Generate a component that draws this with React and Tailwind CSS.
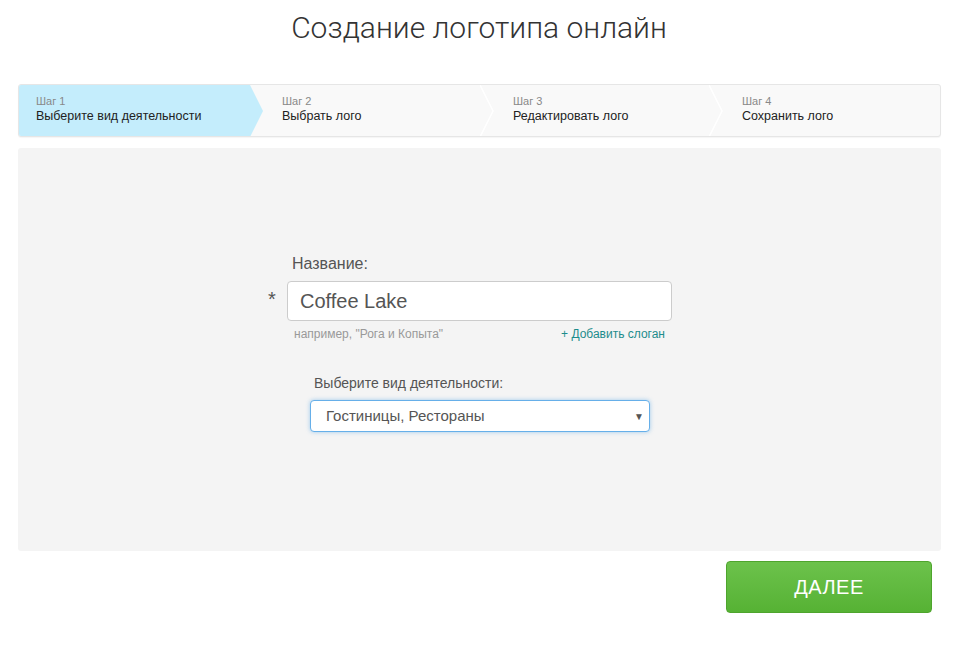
import React from 'react';

const steps = [
  { n: 'Шаг 1', label: 'Выберите вид деятельности', active: true, w: 'w-[231px]' },
  { n: 'Шаг 2', label: 'Выбрать лого', w: 'w-[231px]' },
  { n: 'Шаг 3', label: 'Редактировать лого', w: 'w-[229px]' },
  { n: 'Шаг 4', label: 'Сохранить лого', w: 'flex-1' },
];

const Step = ({ step, last }) => (
  <div
    className={`relative shrink-0 ${step.w} flex flex-col justify-center h-full pb-[2px] ${
      step.active ? 'bg-[#c4edfc] pl-[17px]' : 'pl-[32px]'
    }`}
  >
    <span className="text-[11px] leading-[13px] text-[#888]">{step.n}</span>
    <span className="text-[12.5px] leading-[16px] text-[#222]">{step.label}</span>
    {!last && (
      <svg
        className="absolute top-0 right-[-14px] z-10"
        width="15"
        height="52"
        viewBox="0 0 15 52"
      >
        {step.active ? (
          <polygon points="0,0 1,0 14,26 1,52 0,52" fill="#c4edfc" />
        ) : (
          <polyline points="0,0 13,26 0,52" fill="none" stroke="#fff" strokeWidth="1.5" />
        )}
      </svg>
    )}
  </div>
);

export default function App() {
  return (
    <div className="w-[958px] h-[645px] bg-white font-['Liberation_Sans',Arial,sans-serif]">
      <h1 className="pt-[10px] text-center text-[30px] leading-[36px] font-light text-[#333] font-['Roboto',sans-serif]">
        Создание логотипа онлайн
      </h1>

      <div className="ml-[18px] w-[923px] mt-[38px] h-[53px] flex bg-[#f9f9f9] border border-[#e6e6e6] rounded-[3px] overflow-hidden shadow-[0_1px_1px_rgba(0,0,0,0.04)]">
        {steps.map((s, i) => (
          <Step key={s.n} step={s} last={i === steps.length - 1} />
        ))}
      </div>

      <div className="ml-[18px] w-[923px] mt-[11px] h-[403px] bg-[#f4f4f4] rounded-[3px] flex flex-col">
        <div className="mt-[107px] ml-[248px] w-[420px]">
          <div className="pl-[26px] text-[16px] leading-[18px] text-[#555]">Название:</div>
          <div className="mt-[8px] flex items-center">
            <span className="w-[21px] pl-[2px] text-[20px] text-[#555] leading-none -mt-[4px]">*</span>
            <div className="w-[385px] h-[40px] bg-white border border-[#ccc] rounded-[4px] flex items-center px-[12px] text-[20px] text-[#555]">
              Coffee Lake
            </div>
          </div>
          <div className="mt-[6px] ml-[28px] flex justify-between w-[371px] text-[12px] leading-[14px]">
            <span className="text-[#999]">например, "Рога и Копыта"</span>
            <span className="text-[#1d8c8c]">+ Добавить слоган</span>
          </div>
        </div>

        <div className="mt-[34px] ml-[292px] w-[340px]">
          <div className="pl-[4px] text-[14px] leading-[16px] text-[#555]">Выберите вид деятельности:</div>
          <div className="mt-[9px] h-[32px] bg-white border border-[#66afe9] rounded-[4px] shadow-[0_0_4px_rgba(102,175,233,0.6)] flex items-center justify-between pl-[15px] pr-[5px] text-[15px] text-[#555]">
            <span>Гостиницы, Рестораны</span>
            <span className="text-[10px] text-[#555]">▼</span>
          </div>
        </div>
      </div>

      <div className="mt-[10px] flex justify-end pr-[26px]">
        <button className="w-[206px] h-[52px] rounded-[4px] border border-[#4ea52d] bg-gradient-to-b from-[#6cc24b] to-[#56b234] text-white text-[20px] tracking-[0.5px]">
          ДАЛЕЕ
        </button>
      </div>
    </div>
  );
}
